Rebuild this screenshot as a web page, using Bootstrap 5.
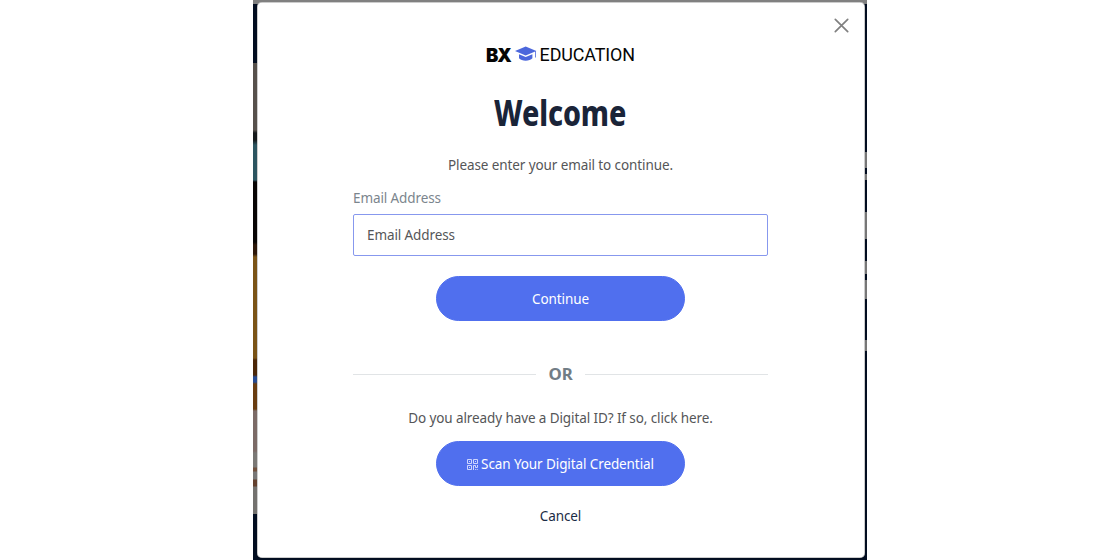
<!DOCTYPE html>
<html lang="en">
<head>
<meta charset="utf-8">
<meta name="viewport" content="width=device-width, initial-scale=1">
<title>Welcome</title>
<link href="https://cdn.jsdelivr.net/npm/bootstrap@5.3.0/dist/css/bootstrap.min.css" rel="stylesheet">
<style>
body{font-family:"Noto Sans",sans-serif;font-size:13.5px;letter-spacing:-.1px;line-height:20px;color:#555658;overflow:hidden}
.backdrop-page{width:614px;height:560px;padding:2px 2px 2px 4px;
background:
linear-gradient(#808080 0 4px,transparent 4px),
linear-gradient(#020d20 0 63px,#56504b 63px 130px,#15191b 133px 140px,#2c5560 145px 180px,#080504 182px 242px,#2c1709 245px 254px,#7a5316 257px 358px,#4b2607 360px 375px,#254a91 377px 382px,#693c10 384px 409px,#7b6a66 411px 451px,#7a7875 453px 467px,#70503d 468px 471px,#777 472px 479px,#63402e 480px 486px,#73716e 487px 514px,#020d20 514px) left/4px 100% no-repeat,
linear-gradient(#020d20 0 152px,#777 152px 168px,#020d20 168px 174px,#777 174px 180px,#020d20 180px 212px,#777 212px 239px,#020d20 239px 261px,#777 261px 274px,#020d20 274px 280px,#777 280px 299px,#020d20 299px 340px,#777 340px 351px,#020d20 351px) right/2px 100% no-repeat,
#020d20}
.modal-content{height:556px;background:#fff;border:0;border-radius:5px;color:inherit;box-shadow:inset 0 0 0 .5px #999}
.form-col{width:415px;margin-left:96px}
.close-x{top:16px;right:16px;width:15px;height:15px;line-height:0}
.brand{width:149px;height:20px;margin-top:42px;color:#050505;white-space:nowrap}
.brand-bx{font:900 18.5px/20px "Inter",sans-serif;letter-spacing:-1px;width:26px;padding-top:1px}
.brand-name{font:400 17.9px/20px Roboto,sans-serif;letter-spacing:-.1px}
.title{font-size:35.5px;font-weight:800;line-height:44px;color:#1a2438;margin:26px 0 0;height:44px}
.title span{display:inline-block;transform:scaleX(.805)}
.intro{margin:21px 0 0}
.form-label{color:#7b858d;margin:13px 0 6px}
.form-control{height:42px;border:1px solid #8798ee;border-radius:2px;padding:0 13px;font-size:13.5px;letter-spacing:-.1px;color:#555658;box-shadow:none!important}
.form-control::placeholder{color:#555658;opacity:1}
.btn-primary{--bs-btn-bg:#506fee;--bs-btn-border-color:#506fee;width:249px;height:45px;font-size:13.5px;letter-spacing:-.1px;line-height:20px;padding:1px 0 0}
.divider{margin-top:42px;height:22px;font-size:16.8px;font-weight:700;color:#727d86;gap:12px}
.divider i{height:1px;background:#e1e4e6;flex:1}
.btn-link{color:#1a2b45;font-size:13.5px;letter-spacing:-.1px;line-height:20px}
</style>
</head>
<body>
<main class="backdrop-page mx-auto">
<div class="modal-content position-relative">
<button type="button" class="close-x btn p-0 border-0 position-absolute" aria-label="Close"><svg width="15" height="15" viewBox="0 0 15 15"><path d="M1.3 1.3 13.7 13.7M13.7 1.3 1.3 13.7" stroke="#808080" stroke-width="1.7" stroke-linecap="round"/></svg></button>
<div class="form-col d-flex flex-column align-items-center">
<div class="brand d-flex align-items-center">
<span class="brand-bx">BX</span>
<svg class="flex-shrink-0" style="margin-left:3px" width="22" height="16" viewBox="0 0 22 16"><path fill="#4c67dc" d="M0 5 10.7.4 21.4 5 10.7 9.6Z"/><path fill="#4c67dc" d="M4 8.2l6.7 2.7 6.7-2.7v4.1c-2.5 3.2-10.9 3.2-13.4 0z"/><path d="M20.5 5v6.5" stroke="#4c67dc" stroke-width=".8"/></svg>
<span class="brand-name" style="margin-left:3px;padding-top:1px">EDUCATION</span>
</div>
<h1 class="title"><span>Welcome</span></h1>
<p class="intro">Please enter your email to continue.</p>
<div class="w-100">
<label class="form-label d-block" for="email">Email Address</label>
<input class="form-control" id="email" type="email" placeholder="Email Address">
</div>
<button class="btn btn-primary rounded-pill" style="margin-top:20px">Continue</button>
<div class="divider d-flex align-items-center w-100"><i></i><span>OR</span><i></i></div>
<p class="m-0" style="padding-top:23px">Do you already have a Digital ID? If so, click here.</p>
<button class="btn btn-primary rounded-pill d-flex align-items-center justify-content-center" style="margin-top:13px"><svg style="margin-right:3px" width="11" height="11" viewBox="0 0 11 11" fill="none" stroke="#dce2ff" stroke-width=".9"><path d="M.5.5h4v4h-4zM6.5.5h4v4h-4zM.5 6.5h4v4h-4zM2 2.5h1M8 2.5h1M2 8.5h1M6.5 11V6.5h2v2h2V6M8.2 10.5h.9M9.8 10.5h.9"/></svg>Scan Your Digital Credential</button>
<button class="btn btn-link text-decoration-none p-0 border-0" style="margin-top:20px">Cancel</button>
</div>
</div>
</main>
<script src="https://cdn.jsdelivr.net/npm/bootstrap@5.3.0/dist/js/bootstrap.bundle.min.js"></script>
</body>
</html>
